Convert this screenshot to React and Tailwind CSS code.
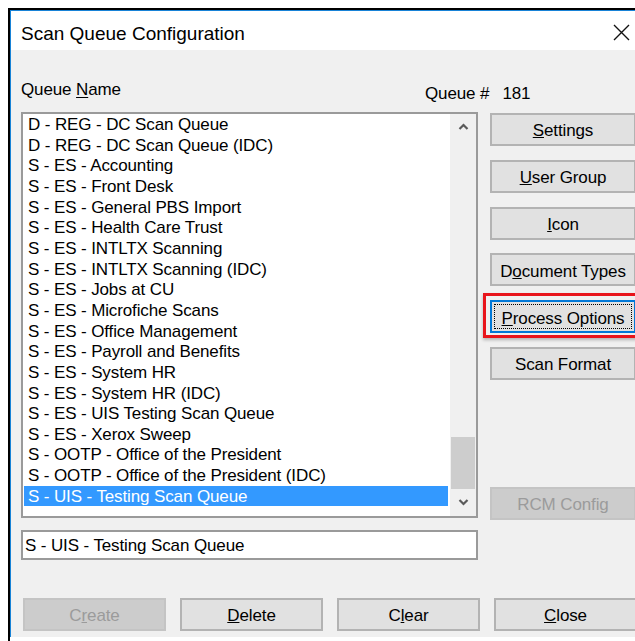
import React from "react";

const queues = [
  "D - REG - DC Scan Queue",
  "D - REG - DC Scan Queue (IDC)",
  "S - ES - Accounting",
  "S - ES - Front Desk",
  "S - ES - General PBS Import",
  "S - ES - Health Care Trust",
  "S - ES - INTLTX Scanning",
  "S - ES - INTLTX Scanning (IDC)",
  "S - ES - Jobs at CU",
  "S - ES - Microfiche Scans",
  "S - ES - Office Management",
  "S - ES - Payroll and Benefits",
  "S - ES - System HR",
  "S - ES - System HR (IDC)",
  "S - ES - UIS Testing Scan Queue",
  "S - ES - Xerox Sweep",
  "S - OOTP - Office of the President",
  "S - OOTP - Office of the President (IDC)",
  "S - UIS - Testing Scan Queue",
];

const selected = queues.length - 1;

function Btn({ children, disabled, className = "" }) {
  return (
    <div
      className={
        "h-[33px] flex items-center justify-center border-2 text-[17px] leading-none " +
        (disabled
          ? "bg-[#cccccc] border-[#c4c4c4] text-[#9b9b9b] "
          : "bg-[#e1e1e1] border-[#b3b3b3] text-black ") +
        className
      }
    >
      <span className="pt-[3px]">{children}</span>
    </div>
  );
}

function Chevron({ down }) {
  return (
    <svg width="11" height="8" viewBox="0 0 11 8">
      <polyline
        points={down ? "1.5,2 5.5,6 9.5,2" : "1.5,6 5.5,2 9.5,6"}
        fill="none"
        stroke="#5a5a5a"
        strokeWidth="2.2"
      />
    </svg>
  );
}

export default function App() {
  return (
    <div className="w-[635px] h-[641px] overflow-hidden bg-white font-['Liberation_Sans',Arial,sans-serif] text-black">
      <div className="ml-[8px] mt-[8px] w-[660px] h-[633px] border-l-2 border-t-2 border-black">
        <div className="h-[627px] border-l border-t border-[#1883d7] flex flex-col">
          {/* title bar */}
          <div className="h-[39px] bg-white flex items-start shrink-0">
            <div className="pl-[10px] pt-[13px] text-[19px] leading-[19px]">
              Scan Queue Configuration
            </div>
            <svg
              className="ml-auto mr-[38px] mt-[13px]"
              width="17"
              height="17"
              viewBox="0 0 17 17"
            >
              <path d="M1 1 L16 16 M16 1 L1 16" stroke="#111" strokeWidth="1.4" />
            </svg>
          </div>

          {/* dialog body */}
          <div className="flex-1 bg-[#f0f0f0] pl-[10px] pt-[28px] text-[17px] tracking-[-0.12px]">
            <div className="flex h-[20.67px] leading-[20.67px]">
              <div className="w-[404px] pt-[2px]">
                Queue <u className="underline-offset-2">N</u>ame
              </div>
              <div className="pt-[6px]">Queue #</div>
              <div className="ml-[13px] pt-[6px]">181</div>
            </div>

            <div className="flex gap-[12px] mt-[13.33px]">
              <div className="w-[457px] flex flex-col">
                {/* list box */}
                <div className="h-[406px] border-2 border-[#9a9a9a] bg-white flex">
                  <div className="flex-1 pl-[1px] pr-[2px]">
                    {queues.map((q, i) => (
                      <div
                        key={q}
                        className={
                          "h-[20.67px] leading-[18.67px] pt-[2px] px-[4px] whitespace-nowrap " +
                          (i === selected ? "bg-[#3399ff] text-white" : "")
                        }
                      >
                        {q}
                      </div>
                    ))}
                  </div>
                  <div className="w-[26px] bg-[#f0f0f0] flex flex-col">
                    <div className="h-[26px] flex items-center justify-center">
                      <Chevron />
                    </div>
                    <div className="flex-1 px-[1px]">
                      <div className="mt-[297px] h-[52px] bg-[#cdcdcd]" />
                    </div>
                    <div className="h-[27px] flex items-center justify-center">
                      <Chevron down />
                    </div>
                  </div>
                </div>

                {/* name field */}
                <div className="mt-[12px] h-[30px] border-2 border-[#9a9a9a] bg-white pl-[2px] pt-[1px] flex items-center whitespace-nowrap">
                  S - UIS - Testing Scan Queue
                </div>
              </div>

              <div className="w-[146px] flex flex-col gap-[13.8px] mt-[1px]">
                <Btn>
                  <u>S</u>ettings
                </Btn>
                <Btn>
                  <u>U</u>ser Group
                </Btn>
                <Btn>
                  <u>I</u>con
                </Btn>
                <Btn>
                  D<u>o</u>cument Types
                </Btn>
                <div className="relative">
                  <div className="h-[33px] flex items-center justify-center border-2 border-[#0078d7] bg-[#e1e1e1] text-[17px] leading-none outline-1 outline-dotted outline-black outline-offset-[-5px]">
                    <span className="pt-[3px]">
                      <u>P</u>rocess Options
                    </span>
                  </div>
                  <span className="absolute -top-[7px] -left-[7px] -right-[14px] -bottom-[5px] border-[3px] border-[#e8141b] shadow-[0_2px_3px_rgba(0,0,0,0.25)]" />
                </div>
                <Btn>Scan Format</Btn>
                <Btn disabled className="mt-[93px]">
                  RCM Config
                </Btn>
              </div>
            </div>

            <div className="flex gap-[14px] pl-[2px] mt-[38px]">
              <Btn disabled className="w-[143px]">
                C<u>r</u>eate
              </Btn>
              <Btn className="w-[143px]">
                <u>D</u>elete
              </Btn>
              <Btn className="w-[143px]">
                C<u>l</u>ear
              </Btn>
              <Btn className="w-[143px]">
                <u>C</u>lose
              </Btn>
            </div>
          </div>
        </div>
      </div>
    </div>
  );
}
